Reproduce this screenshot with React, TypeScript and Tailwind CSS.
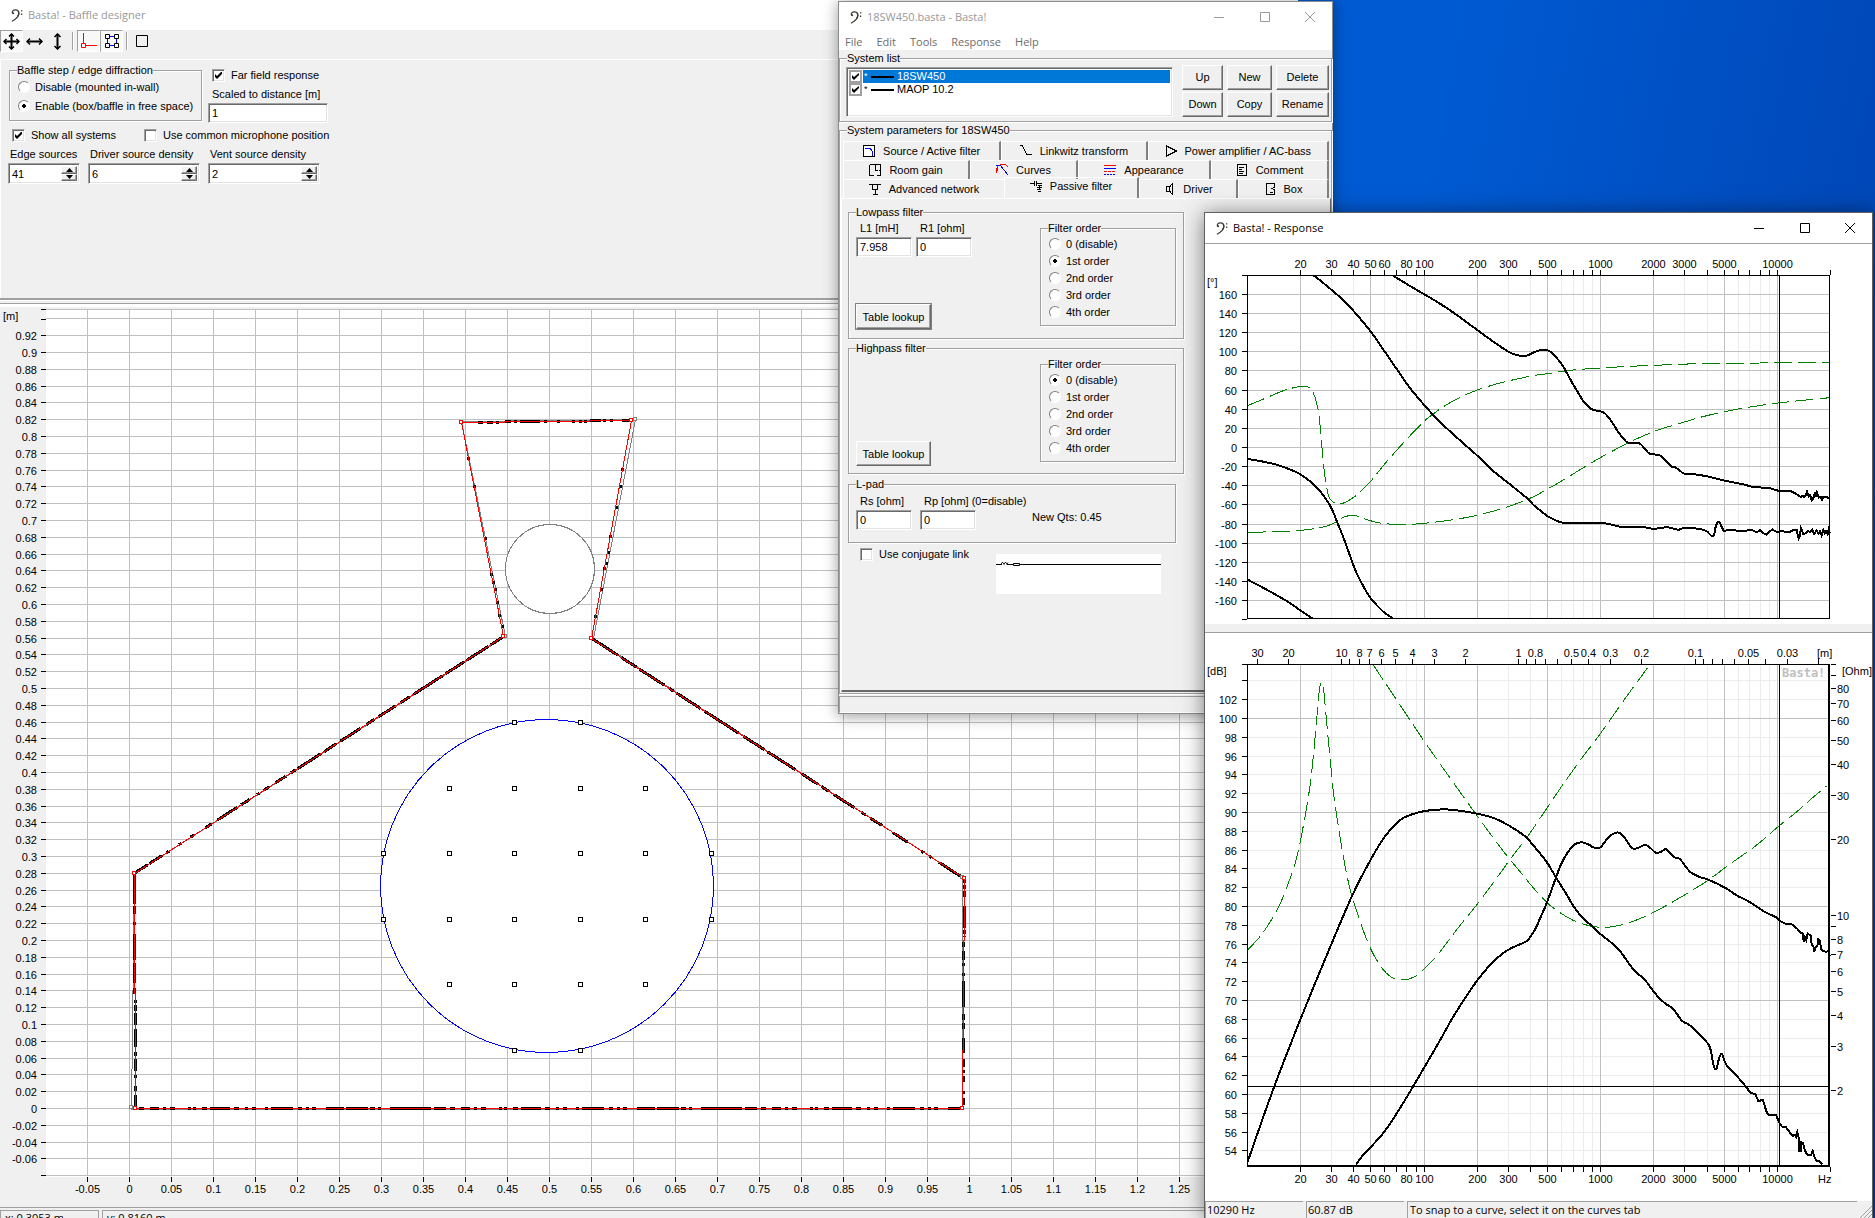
import React from 'react';

type Pt = [number, number];

const BOX =
  'border border-[#a0a0a0] border-r-white border-b-white bg-white shadow-[inset_1px_1px_0_#696969,inset_-1px_-1px_0_#e3e3e3]';
const BUTTON =
  'border border-white border-r-[#696969] border-b-[#696969] bg-[#f0f0f0] shadow-[inset_-1px_-1px_0_#a0a0a0] whitespace-nowrap';

/* ---------- small controls ---------- */

const ClefIcon: React.FC = () => (
  <svg width="12" height="13" viewBox="0 0 12 13" fill="none" stroke="#3c3c34" strokeWidth="1.2">
    <path d="M1.5 4.5C.6 2.200 2.300.8 4.300.8c2.300 0 3.600 1.300 3.600 3.500 0 3.200-3 5.900-7 7.900" />
    <path d="M7.200 2.200c.9 1.500.6 3.600-.7 5.200" />
    <circle cx="2.200" cy="4.300" r="1" fill="#3c3c34" stroke="none" />
    <path d="M10 1.200h1.300v1.300H10zM10 4.600h1.300v1.300H10z" fill="#3c3c34" stroke="none" />
  </svg>
);

const Group: React.FC<{ title: string; className?: string; children?: React.ReactNode }> = ({
  title,
  className = '',
  children,
}) => (
  <fieldset
    className={`min-w-0 border border-[#a0a0a0] shadow-[1px_1px_0_#fff,inset_1px_1px_0_#fff] ${className}`}
  >
    <legend className="ml-[7px] bg-[#f0f0f0] leading-[14px] whitespace-nowrap">{title}</legend>
    {children}
  </fieldset>
);

const Check: React.FC<{ label: string; checked?: boolean; className?: string }> = ({
  label,
  checked = false,
  className = '',
}) => (
  <label className={`flex items-center gap-[6px] whitespace-nowrap ${className}`}>
    <span className="relative flex">
      <input
        type="checkbox"
        defaultChecked={checked}
        className={`peer h-[13px] w-[13px] appearance-none ${BOX}`}
      />
      <svg
        className="pointer-events-none absolute top-[3px] left-[3px] hidden peer-checked:block"
        width="7"
        height="7"
        viewBox="0 0 7 7"
      >
        <path d="M0 2v3l2 2 5-5V-1L2 4z" />
      </svg>
    </span>
    {label}
  </label>
);

const Radio: React.FC<{ name: string; label: string; checked?: boolean; className?: string }> = ({
  name,
  label,
  checked = false,
  className = '',
}) => (
  <label className={`flex items-center gap-[5px] whitespace-nowrap ${className}`}>
    <input
      type="radio"
      name={name}
      defaultChecked={checked}
      className="h-3 w-3 appearance-none rounded-full border border-[#808080] border-r-white border-b-white bg-white checked:bg-[radial-gradient(circle,#000_2px,#fff_2px)]"
    />
    {label}
  </label>
);

const Field: React.FC<{ label: string; value: string; className?: string }> = ({
  label,
  value,
  className = '',
}) => (
  <label className={`flex flex-col gap-[2px] ${className}`}>
    <span className="pl-1 leading-[14px] whitespace-nowrap">{label}</span>
    <input type="text" defaultValue={value} className={`h-5 w-full px-[3px] ${BOX}`} />
  </label>
);

const Spin: React.FC<{ label: string; value: string; className?: string }> = ({
  label,
  value,
  className = '',
}) => {
  const id = label.toLowerCase().replace(/ /g, '-');
  return (
    <div className={`flex flex-col gap-[2px] ${className}`}>
      <label htmlFor={id} className="pl-[2px] leading-[14px] whitespace-nowrap">
        {label}
      </label>
      <div className={`flex h-[21px] p-[2px] ${BOX}`}>
        <input id={id} type="text" defaultValue={value} className="w-0 flex-1 bg-transparent px-px" />
        <div className="flex w-4 flex-col">
          <button aria-label={`${label} up`} className={`flex flex-1 items-center justify-center ${BUTTON}`}>
            <svg width="7" height="4">
              <path d="M0 4l3.500-4L7 4z" />
            </svg>
          </button>
          <button aria-label={`${label} down`} className={`flex flex-1 items-center justify-center ${BUTTON}`}>
            <svg width="7" height="4">
              <path d="M0 0h7L3.500 4z" />
            </svg>
          </button>
        </div>
      </div>
    </div>
  );
};

const TitleBar: React.FC<{ title: string; tone: string; controls?: boolean }> = ({
  title,
  tone,
  controls = true,
}) => (
  <header className={`flex h-[30px] shrink-0 items-center bg-white pl-[11px] ${tone}`}>
    <ClefIcon />
    <h1 className="ml-[5px] flex-1 font-['Open_Sans',sans-serif] text-[11px]">{title}</h1>
    {controls && (
      <div className="flex">
        <button aria-label="Minimize" className="flex h-[30px] w-[46px] items-center justify-center">
          <svg width="10" height="10" stroke="currentColor">
            <path d="M0 5.500h10" />
          </svg>
        </button>
        <button aria-label="Maximize" className="flex h-[30px] w-[45px] items-center justify-center">
          <svg width="10" height="10" fill="none" stroke="currentColor">
            <path d="M.5.5h9v9h-9z" />
          </svg>
        </button>
        <button aria-label="Close" className="flex h-[30px] w-[45px] items-center justify-center">
          <svg width="10" height="10" stroke="currentColor">
            <path d="M0 0l10 10M10 0L0 10" />
          </svg>
        </button>
      </div>
    )}
  </header>
);

/* ---------- baffle designer ---------- */

const bx = (m: number) => Math.round(129 + 840 * m) + 0.5;
const by = (m: number) => Math.round(1108 - 840 * m) + 0.5;

const yMarks = Array.from({ length: 51 }, (_, i) => (i * 2 - 6) / 100).filter((v) => v <= 0.92);
const xMarks = Array.from({ length: 27 }, (_, i) => (i * 5 - 5) / 100);

const neckDots: Pt[] = [
  [468, 458], [474, 486], [485, 538], [491, 574], [493, 582], [495, 589], [497, 602], [499, 615], [502, 626],
  [622, 469], [620, 486], [616, 507], [610, 536], [608, 552], [606, 563], [604, 568], [601, 589], [595, 616],
];
const topRuns: Pt[] = [
  [478, 483], [487, 493], [496, 499], [505, 511], [514, 517], [520, 540], [544, 547], [557, 560],
  [572, 575], [579, 582], [584, 587], [590, 601], [603, 606], [610, 613], [622, 630],
];
const driverGrid: Pt[] = [
  ...[788, 853, 919, 984].flatMap((y) => [449, 514, 580, 645].map((x): Pt => [x, y])),
  [514, 722], [580, 722], [514, 1050], [580, 1050],
  [383, 853], [383, 919], [711, 853], [711, 919],
];
const corners: Pt[] = [
  [461, 422], [631, 420], [591, 638], [964, 878], [962, 1108], [135, 1108], [134, 873], [503, 636],
];
const greyCorners: Pt[] = [[635, 419], [962, 877], [131, 1107], [505, 636]];

const BafflePlot: React.FC = () => (
  <svg
    className="block shrink-0"
    width="1297"
    height="900"
    viewBox="1 307 1297 900"
    shapeRendering="crispEdges"
    fontSize="11"
  >
    <rect x="46" y="309" width="1260" height="868" fill="#fff" />
    <g stroke="#c0c0c0">
      {xMarks.map((v) => (
        <path key={v} d={`M${bx(v)} 309V1176`} />
      ))}
      {[0.94, ...yMarks].map((v) => (
        <path key={v} d={`M46 ${by(v)}H1300`} />
      ))}
      <path d="M46 309.500H1300M46 1175.500H1300" />
    </g>
    <g stroke="#000">
      {xMarks.map((v) => (
        <path key={v} d={`M${bx(v)} 1177v5`} />
      ))}
      {yMarks.map((v) => (
        <path key={v} d={`M41 ${by(v)}h5`} />
      ))}
      <path d="M41 309.500h5M41 319.500h5M41 1175.500h5" />
    </g>
    {yMarks.map((v) => (
      <text key={v} x="37" y={by(v) + 4} textAnchor="end">
        {v}
      </text>
    ))}
    {xMarks.map((v) => (
      <text key={v} x={bx(v)} y="1193" textAnchor="middle">
        {v}
      </text>
    ))}
    <text x="3" y="320">[m]</text>

    <circle cx="550" cy="569" r="44.500" fill="#fff" stroke="#808080" />
    <path
      d="M461.500 421.500L635.500 419.500 593.500 638.500 962.500 877.500V1109.500H131.500L134.500 873.500 505.500 636.500z"
      fill="none"
      stroke="#808080"
    />
    {/* edge sources */}
    <g stroke="#000" strokeWidth="3" fill="none">
      <path
        d="M503 637L134 873.500"
        strokeDasharray="15 2 26 3 22 4 34 5 11 6 20 5 9 7 24 5 14 4 28 3 5 6 12 7 7 5 3 9 10 4 24 7 8 13 4 11 3 12 3 5"
      />
      <path
        d="M592 638.500L964 878.500"
        strokeDasharray="31 4 18 3 30 6 5 4 28 5 40 6 25 4 33 7 20 4 9 6 24 9 5 5 14 13 18 16 3 6 3 9"
      />
      <path d="M134.500 874V994" strokeDasharray="30 2 8 8 3 9 26 3 20 5 6 3" />
      <path d="M135.500 1000V1108" strokeDasharray="3 2 6 2 12 4 18 5 4 3 12 4 3 8 5 4 11 3" />
      <path d="M964.500 880V937" strokeDasharray="3 2 4 2 6 9 22 2 4 2" />
      <path d="M963.500 942V1108" strokeDasharray="5 4 9 3 3 7 3 5 26 7 6 3 6 9 15 6 8 3 3 3 6 9 3 4 7 4 12 3" />
      <path
        d="M139 1108.500H962"
        strokeDasharray="5 6 9 4 3 4 5 13 3 2 3 6 5 3 20 4 5 6 3 4 4 9 3 3 22 5 4 4 3 3 4 10 18 2 22 2 5 3 3 9 41 3 12 4"
      />
      {topRuns.map(([a, b]) => (
        <path key={a} d={`M${a} ${a > 588 ? 420.5 : a > 504 ? 421.5 : 422.5}H${b}`} />
      ))}
    </g>
    {neckDots.map(([x, y]) => (
      <rect key={`${x}-${y}`} x={x - 1} y={y - 1} width="3" height="3" />
    ))}
    <path
      d="M461.500 422.500H504V421.500H589V420.500H631.500L591.500 638.500 964.500 878.500V940H963.500V1050H962.500V1108.500H135.500V993H134.500V873.500L503.500 636.500z"
      fill="none"
      stroke="#f00"
    />
    {greyCorners.map(([x, y]) => (
      <rect key={x} x={x - 1.5} y={y - 1.5} width="3" height="3" fill="#fff" stroke="#808080" />
    ))}
    {corners.map(([x, y]) => (
      <rect key={x} x={x - 1.5} y={y - 1.5} width="3" height="3" fill="#fff" stroke="#f00" />
    ))}

    <circle cx="547" cy="886" r="166.500" fill="#fff" stroke="#00f" />
    {driverGrid.map(([x, y]) => (
      <rect key={`${x}-${y}`} x={x - 1.5} y={y - 1.5} width="4" height="4" fill="#fff" stroke="#000" />
    ))}
  </svg>
);

const pressed =
  'border border-[#a0a0a0] border-r-white border-b-white bg-[#f8f8f8] flex h-[22px] w-[23px] items-center justify-center';

const BaffleWindow: React.FC = () => (
  <section className="absolute top-0 left-0 flex h-full w-[1298px] flex-col overflow-hidden bg-[#f0f0f0]">
    <TitleBar title="Basta! - Baffle designer" tone="text-[#999]" controls={false} />
    <div className="flex h-[29px] shrink-0 items-start">
      <button aria-label="Move" className={pressed}>
        <svg width="17" height="17" stroke="#000" strokeWidth="2">
          <path d="M8.500 1v15M1 8.500h15" />
          <path d="M6 3.500L8.500 1 11 3.500M6 13.500L8.500 16l2.500-2.500M3.500 6L1 8.500 3.500 11M13.500 6L16 8.500 13.500 11" fill="none" strokeWidth="1.500" />
        </svg>
      </button>
      <button aria-label="Move horizontally" className="flex h-[22px] w-[22px] items-center justify-center">
        <svg width="17" height="9" stroke="#000" strokeWidth="2">
          <path d="M1 4.500h15" />
          <path d="M4 1.500l-3 3 3 3M13 1.500l3 3-3 3" fill="none" strokeWidth="1.500" />
        </svg>
      </button>
      <button aria-label="Move vertically" className="flex h-[22px] w-6 items-center justify-center">
        <svg width="9" height="17" stroke="#000" strokeWidth="2">
          <path d="M4.500 1v15" />
          <path d="M1.500 4l3-3 3 3M1.500 13l3 3 3-3" fill="none" strokeWidth="1.500" />
        </svg>
      </button>
      <span className="mx-[3px] mt-[2px] h-[18px] w-[2px] border-l border-[#a0a0a0] bg-white" />
      <button aria-label="Corner" className={pressed}>
        <svg width="16" height="16" fill="none" stroke="#f00">
          <path d="M2.500 0v10M5 12.500h11" />
          <path d="M.5 10.500h4v4h-4z" />
        </svg>
      </button>
      <button aria-label="Sources" className={pressed}>
        <svg width="14" height="14" fill="none" stroke="#000">
          <path d="M2.500 3v8M11.500 3v8M4 2.500h6M4 11.500h6" stroke="#00f" />
          <path d="M.5.5h4v4h-4zM9.500.5h4v4h-4zM.5 9.500h4v4h-4zM9.500 9.500h4v4h-4z" fill="#fff" />
        </svg>
      </button>
      <span className="mx-[3px] mt-[2px] h-[18px] w-[2px] border-l border-[#a0a0a0] bg-white" />
      <button aria-label="Outline" className="flex h-[22px] w-[21px] items-center justify-center">
        <svg width="12" height="12" fill="none" stroke="#000">
          <path d="M.5.5h11v11H.5z" />
        </svg>
      </button>
    </div>

    <div className="h-[239px] shrink-0 border-t border-l border-white pt-[3px] pl-2">
      <div className="flex gap-[6px]">
        <Group title="Baffle step / edge diffraction" className="h-[58px] w-[193px]">
          <Radio name="step" label="Disable (mounted in-wall)" className="mt-px ml-2 h-[18px]" />
          <Radio name="step" label="Enable (box/baffle in free space)" checked className="ml-2 h-5" />
        </Group>
        <div className="flex flex-col">
          <Check label="Far field response" checked className="mt-[5px] ml-1 h-[14px]" />
          <Field label="Scaled to distance [m]" value="1" className="mt-[5px] w-[120px]" />
        </div>
      </div>
      <div className="mt-1 ml-[3px] flex h-4">
        <Check label="Show all systems" checked className="w-[132px]" />
        <Check label="Use common microphone position" />
      </div>
      <div className="mt-1 -ml-px flex gap-2">
        <Spin label="Edge sources" value="41" className="w-[72px]" />
        <Spin label="Driver source density" value="6" className="w-28" />
        <Spin label="Vent source density" value="2" className="w-28" />
      </div>
    </div>
    <div className="flex h-[9px] shrink-0 flex-col justify-between border-t-2 border-[#a0a0a0]">
      <span className="h-px bg-white" />
      <span className="h-[4px] border-t border-[#a0a0a0] bg-white" />
    </div>
    <div className="pl-px">
      <BafflePlot />
    </div>
    <footer className="flex h-[30px] shrink-0 gap-[3px] border-t border-[#a0a0a0] pt-[2px] font-['Open_Sans',sans-serif]">
      <span className="w-[99px] border border-[#a0a0a0] pl-1 whitespace-nowrap">x: 0.3053 m</span>
      <span className="flex-1 border border-[#a0a0a0] pl-1">y: 0.8160 m</span>
    </footer>
  </section>
);

/* ---------- main window ---------- */

const tabRows = [
  {
    cols: 'grid-cols-[158fr_146fr_181fr]',
    tabs: [
      { label: 'Source / Active filter', icon: 'source' },
      { label: 'Linkwitz transform', icon: 'linkwitz' },
      { label: 'Power amplifier / AC-bass', icon: 'amp' },
    ],
  },
  {
    cols: 'grid-cols-[127fr_108fr_133fr_118fr]',
    tabs: [
      { label: 'Room gain', icon: 'room' },
      { label: 'Curves', icon: 'curves' },
      { label: 'Appearance', icon: 'appearance' },
      { label: 'Comment', icon: 'comment' },
    ],
  },
  {
    cols: 'grid-cols-[161fr_135fr_99fr_91fr]',
    tabs: [
      { label: 'Advanced network', icon: 'network' },
      { label: 'Passive filter', icon: 'passive' },
      { label: 'Driver', icon: 'driver' },
      { label: 'Box', icon: 'box' },
    ],
  },
];

const tabIcons: Record<string, React.ReactNode> = {
  source: (
    <>
      <path d="M.5.5h11v11H.5z" fill="#fff" />
      <path d="M2 3.500h4c3 0 3.500 3 4 7" stroke="#00f" />
    </>
  ),
  linkwitz: <path d="M0 .5h2l5 9h2l1.500-1M10 9.500h2" />,
  amp: <path d="M1.500 1v10l10-5z" />,
  room: <path d="M.5.5h11v11H8M5 11.500H.5V.5M6.500.5V7M6.500 6.500h2M11 6.500h-1.500" />,
  curves: (
    <>
      <path d="M0 6l2-4 3-1.500h4l3 2" stroke="#f00" />
      <path d="M0 1.500h4.500L12 11" stroke="#00f" />
      <path d="M0 9l2-5" stroke="#f00" />
    </>
  ),
  appearance: (
    <>
      <path d="M0 1.500h12" stroke="#f00" />
      <path d="M0 4.500h12" stroke="#00f" />
      <path d="M0 7.500h12" stroke="#f00" strokeDasharray="3 1" />
      <path d="M0 10.500h12" stroke="#00f" strokeDasharray="2 1" />
    </>
  ),
  comment: <path d="M1.500.5h9v11h-9zM3 3.500h5M3 5.500h3M3 7.500h5M3 9.500h4" />,
  network: <path d="M0 1.500h12M3.500 1.500v5h5v-5M6.500 7v4M4 11.500h5" />,
  passive: <path d="M0 3.500h4M4.500 1v5M6.500 1v5M7 3.500h5M8 5.500h3L8 7.500h3L8 9.500h3M8 11.500h3" />,
  driver: <path d="M3.500 3.500h3v5h-3zM7 3.500L9.500.5v11L7 8.500" />,
  box: <path d="M2.500.5h8V4L8 5.500 10.500 7v4.500h-8zM6 9.500h3" />,
};

const TabIcon: React.FC<{ name: string }> = ({ name }) => (
  <svg width="12" height="12" viewBox="0 0 12 12" fill="none" stroke="#000" shapeRendering="crispEdges">
    {tabIcons[name]}
  </svg>
);

const orders = ['0 (disable)', '1st order', '2nd order', '3rd order', '4th order'];

const FilterOrder: React.FC<{ name: string; selected: number }> = ({ name, selected }) => (
  <Group title="Filter order" className="mt-[2px] h-[105px] w-[136px]">
    <div className="pl-2">
      {orders.map((o, i) => (
        <Radio key={o} name={name} label={o} checked={i === selected} className="h-[17px]" />
      ))}
    </div>
  </Group>
);

const SystemRow: React.FC<{ name: string; selected?: boolean }> = ({ name, selected = false }) => (
  <label className="flex h-[13px] items-center">
    <span className="relative flex w-[14px]">
      <input
        type="checkbox"
        defaultChecked
        aria-label={name}
        className="h-[13px] w-[13px] appearance-none border-2 border-[#a0a0a0] bg-white"
      />
      <svg className="pointer-events-none absolute top-[3px] left-[3px]" width="7" height="7">
        <path d="M0 2v3l2 2 5-5V0L2 4z" />
      </svg>
    </span>
    <span
      className={`flex h-[13px] flex-1 items-center leading-[13px] ${selected ? 'bg-[#0078d7] text-white' : ''}`}
    >
      <span className="w-2 pl-px text-[9px]">*</span>
      <span className="mr-[3px] h-[2px] w-[23px] bg-black" />
      {name}
    </span>
  </label>
);

const MainWindow: React.FC = () => (
  <section className="absolute top-px left-[838px] flex h-[713px] w-[495px] flex-col border border-[#8c8c8c] bg-[#f0f0f0] shadow-[0_2px_14px_rgba(0,0,0,0.4)]">
    <TitleBar title="18SW450.basta - Basta!" tone="text-[#999]" />
    <nav className="flex h-[18px] shrink-0 items-center gap-[14px] bg-white pt-px pl-[6px] font-['Open_Sans',sans-serif] text-[11px] text-[#6d6d6d]">
      <button>File</button>
      <button>Edit</button>
      <button>Tools</button>
      <button>Response</button>
      <button>Help</button>
    </nav>

    <Group title="System list" className="mt-px h-[71px]">
      <div className="flex gap-[9px] pr-[2px] pl-[6px]">
        <div className={`mt-[2px] h-[50px] flex-1 p-[2px] ${BOX}`}>
          <SystemRow name="18SW450" selected />
          <SystemRow name="MAOP 10.2" />
        </div>
        <div className="grid grid-cols-[41px_45px_53px] gap-x-1 gap-y-[2px]">
          {['Up', 'New', 'Delete', 'Down', 'Copy', 'Rename'].map((b) => (
            <button key={b} className={`h-[25px] pb-[2px] ${BUTTON}`}>
              {b}
            </button>
          ))}
        </div>
      </div>
    </Group>

    <Group title="System parameters for 18SW450" className="mt-px h-[571px]">
      <div className="pt-1 pr-[2px] pl-[3px]">
        {tabRows.map((row) => (
          <div key={row.cols} className={`grid ${row.cols}`}>
            {row.tabs.map((t) => (
              <button
                key={t.label}
                className={`flex h-[19px] items-center justify-center gap-2 border-t border-l border-white whitespace-nowrap ${
                  t.icon === 'passive'
                    ? '-mt-[2px] h-[21px] border-r-2 border-r-[#808080] pb-1'
                    : t.icon === 'network'
                    ? ''
                    : 'border-r-2 border-r-[#808080]'
                }`}
              >
                <TabIcon name={t.icon} />
                {t.label}
              </button>
            ))}
          </div>
        ))}
      </div>
      <div className="ml-px h-[494px] border border-white border-r-[#696969] border-b-2 border-b-[#696969] pt-[6px] pl-[6px]">
        <Group title="Lowpass filter" className="h-[134px] w-[336px]">
          <div className="flex h-[119px] justify-between px-[7px]">
            <div className="flex flex-col justify-between pt-[2px] pb-[9px]">
              <div className="flex gap-1">
                <Field label="L1 [mH]" value="7.958" className="w-14" />
                <Field label="R1 [ohm]" value="0" className="w-14" />
              </div>
              <button className={`h-[25px] w-[75px] outline outline-[#808080] ${BUTTON}`}>Table lookup</button>
            </div>
            <FilterOrder name="lowpass" selected={1} />
          </div>
        </Group>
        <Group title="Highpass filter" className="mt-[2px] h-[133px] w-[336px]">
          <div className="flex h-[118px] justify-between px-[7px]">
            <button className={`mb-[7px] h-[25px] w-[75px] self-end ${BUTTON}`}>Table lookup</button>
            <FilterOrder name="highpass" selected={0} />
          </div>
        </Group>
        <Group title="L-pad" className="mt-[3px] h-[66px] w-[328px]">
          <div className="flex gap-2 pt-[3px] pl-[7px]">
            <Field label="Rs [ohm]" value="0" className="w-14" />
            <Field label="Rp [ohm] (0=disable)" value="0" className="w-14" />
            <span className="mt-4 ml-12 leading-[14px]">New Qts: 0.45</span>
          </div>
        </Group>
        <div className="flex items-start pl-3">
          <Check label="Use conjugate link" className="mt-1 w-[136px]" />
          <svg className="mt-[11px] bg-white" width="165" height="40" fill="none" stroke="#000">
            <path d="M0 10.500h6M11 10.500h6M24 10.500h141" />
            <path d="M5 10.500l1-2h1l1 2 1-2h1l1 2 1-2" strokeWidth=".8" />
            <path d="M17.500 9.500h6v2h-6z" />
          </svg>
        </div>
      </div>
    </Group>
    <footer className="mt-[2px] h-[17px] border border-[#a0a0a0] border-r-white border-b-white" />
  </section>
);

/* ---------- response window ---------- */

// curve samples are kept in thirds of a pixel, px() brings them back to chart pixels
const px = (x0: number, y0: number, sy: number, pts: Pt[]): Pt[] =>
  pts.map(([x, y]) => [x0 + x / 3, y0 + y / sy]);

const smooth = (p: Pt[]) => {
  let d = `M${p[0][0].toFixed(1)} ${p[0][1].toFixed(1)}`;
  for (let i = 0; i < p.length - 1; i++) {
    const a = p[Math.max(i - 1, 0)];
    const b = p[i];
    const c = p[i + 1];
    const e = p[Math.min(i + 2, p.length - 1)];
    const n = [
      b[0] + (c[0] - a[0]) / 6, b[1] + (c[1] - a[1]) / 6,
      c[0] - (e[0] - b[0]) / 6, c[1] - (e[1] - b[1]) / 6,
      c[0], c[1],
    ].map((v) => v.toFixed(1));
    d += `C${n.join(' ')}`;
  }
  return d;
};

// the noisy end of a curve is drawn with straight segments
const jagged = (p: Pt[]) => p.map(([x, y]) => `L${x.toFixed(1)} ${y.toFixed(1)}`).join('');

const phase = (left: Pt[], right: Pt[] = [], tail: Pt[] = []) =>
  smooth([...px(1200, 205, 3, left), ...px(1530, 205, 3, right)]) + jagged(px(1530, 205, 3, tail));
const level = (left: Pt[], right: Pt[] = [], tail: Pt[] = []) =>
  smooth([...px(1200, 620, 2.622, left), ...px(1530, 620, 2.622, right)]) +
  jagged(px(1530, 620, 2.622, tail));

const phaseCurves = [
  phase(
    [[342,212],[360,226],[395,255],[430,286],[460,317],[511,378],[553,438],[590,492],[620,536],[650,574],[673,600],[697,627],[740,670],[800,724],[832,752],[875,794],[925,834],[985,883]],
    [[8,898],[25,912],[52,933],[80,947],[98,953],[150,954],[215,954],[245,959],[280,967],[330,965],[370,971],[412,967],[445,974],[465,968],[510,972],[530,979],[545,993],[552,990],[558,962],[567,951],[575,965],[582,977],[600,974],[630,978],[665,975]],
    [[680,982],[690,975],[698,984],[710,989],[718,980],[728,973],[735,979],[745,982],[755,977],[765,981],[778,982],[790,975],[800,975],[803,990],[806,1001],[808,998],[813,970],[820,988],[828,984],[835,978],[840,982],[847,975],[853,987],[860,976],[865,986],[870,979],[875,992],[880,974],[884,984],[888,979],[893,988],[896,974],[900,984]]
  ),
  phase(
    [[580,212],[620,237],[673,268],[720,296],[765,326],[832,375],[880,410],[925,440],[950,450],[968,453],[985,451]],
    [[3,446],[20,439],[40,434],[58,438],[75,453],[98,482],[130,539],[160,588],[180,609],[195,616],[222,623],[245,650],[265,682],[285,706],[295,713],[328,715],[345,732],[360,747],[388,750],[405,765],[425,785],[438,788],[463,806],[495,808],[530,814],[585,827],[640,838],[670,846],[715,849],[745,857],[780,858],[800,868]],
    [[813,877],[817,872],[822,876],[828,870],[831,860],[836,874],[841,870],[845,886],[850,880],[855,862],[857,876],[861,862],[866,878],[872,875],[876,884],[880,876],[890,876],[895,880],[900,877]]
  ),
  phase([[143,762],[195,771],[245,784],[301,808],[345,842],[375,878],[395,911],[413,955],[435,1010],[460,1080],[480,1125],[511,1178],[550,1220],[578,1240]]),
  phase([[143,1124],[200,1154],[260,1188],[301,1216],[337,1240]]),
];

const phaseImpedance = [
  phase(
    [[143,602],[200,578],[250,557],[290,546],[301,544],[325,546],[338,560],[350,595],[358,640],[366,730],[375,815],[385,870],[395,887],[415,897],[440,890],[470,870],[511,830],[560,770],[620,703],[673,648],[697,629],[730,605],[780,577],[832,555],[900,534],[970,518]],
    [[20,510],[52,506],[130,495],[211,489],[300,484],[420,479],[540,475],[690,474],[740,472],[900,472]]
  ),
  phase(
    [[143,982],[260,979],[330,973],[380,963],[413,949],[430,937],[460,931],[490,940],[511,947],[553,956],[620,958],[673,955],[760,944],[832,931],[915,908],[985,882]],
    [[30,865],[100,825],[160,788],[211,758],[290,716],[370,680],[450,655],[530,632],[620,613],[715,598],[780,590],[850,583],[900,578]]
  ),
];

const levelCurves = [
  level(
    [[143,1420],[222,1225],[301,1048],[395,848],[457,722],[511,630],[553,570],[600,525],[635,510],[673,501],[720,497],[760,498],[832,508],[880,519],[925,538],[975,567]],
    [[5,586],[30,612],[52,637],[78,675],[110,720],[130,750],[160,783],[190,805],[211,823],[245,847],[270,868],[300,905],[320,925],[345,944],[380,984],[405,1005],[430,1020],[455,1050],[480,1063],[510,1089],[535,1112],[543,1132],[552,1172],[560,1176],[567,1150],[576,1138],[585,1160],[600,1178],[620,1195]],
    [[640,1215],[650,1226],[662,1241],[676,1242],[685,1262],[698,1258],[710,1290],[716,1298],[738,1298],[750,1322],[756,1328],[768,1330],[778,1342],[788,1353],[794,1350],[798,1355],[802,1343],[806,1358],[808,1393],[812,1393],[814,1370],[819,1372],[824,1390],[830,1400],[838,1404],[844,1402],[848,1392],[854,1410],[860,1418],[868,1418],[876,1427]]
  ),
  level(
    [[468,1428],[490,1402],[511,1383],[553,1342],[600,1280],[640,1222],[673,1173],[720,1102],[760,1040],[800,985],[832,945],[870,905],[910,873],[940,858],[978,843]],
    [[0,832],[15,812],[30,783],[52,738],[78,675],[95,637],[115,607],[135,588],[155,583],[175,588],[190,596],[211,596],[235,570],[262,557],[280,567],[305,597],[322,598],[345,590],[360,597],[378,611],[392,608],[407,601],[420,610],[435,623],[450,627],[480,660],[510,674],[535,681],[585,702],[620,722],[660,740],[700,763],[740,780]],
    [[752,790],[768,797],[785,798],[800,808],[812,820],[818,822],[821,844],[825,832],[829,840],[833,822],[838,825],[842,828],[845,850],[850,855],[853,870],[857,858],[862,856],[865,838],[870,842],[873,862],[878,868],[890,870],[895,866],[900,882]]
  ),
];

const levelImpedance = [
  level(
    [[143,865],[180,830],[215,785],[240,745],[265,690],[285,640],[301,580],[320,490],[335,400],[350,260],[358,185],[364,165],[371,185],[380,270],[390,360],[400,450],[413,530],[430,620],[450,705],[480,790],[511,860],[545,912],[575,937],[605,944],[640,937],[673,915],[720,870],[770,812],[832,745],[900,665],[930,628],[985,565]],
    [[30,520],[52,492],[100,430],[160,357],[211,298],[290,200],[360,117]]
  ),
  level(
    [[519,117],[590,210],[673,318],[740,402],[830,512],[900,595],[930,628],[970,670]],
    [[0,692],[30,722],[60,748],[100,773],[150,795],[211,806],[260,802],[310,790],[370,767],[420,743],[475,715],[535,682],[600,640],[680,590],[740,545],[800,503],[845,468],[890,435]]
  ),
];

const fx = (hz: number) => Math.round(1247 + (Math.log10(hz) - 1) * 176.6) + 0.5;
const mx = (m: number) => Math.round(1518 - Math.log10(m) * 176.6) + 0.5;
const degY = (deg: number) => Math.round(447 - deg * 0.957) + 0.5;
const dbY = (db: number) => Math.round(718 + (100 - db) * 9.4) + 0.5;
const ohmY = (ohm: number) => Math.round(915 - (Math.log10(ohm) - 1) * 251) + 0.5;

const freqs = [10, 100, 1000].flatMap((d) => [1, 2, 3, 4, 5, 6, 7, 8, 9].map((n) => n * d)).slice(1);
freqs.push(10000);
const freqLabels = [20, 30, 40, 50, 60, 80, 100, 200, 300, 500, 1000, 2000, 3000, 5000, 10000];
const isMajor = (hz: number) => /^[125]0+$/.test(String(hz));
const degs = Array.from({ length: 17 }, (_, i) => 160 - i * 20);
const dbs = Array.from({ length: 26 }, (_, i) => 104 - i * 2);
const metres = [30, 20, 10, 9, 8, 7, 6, 5, 4, 3, 2, 1, 0.9, 0.8, 0.7, 0.6, 0.5, 0.4, 0.3, 0.2, 0.1, 0.09, 0.08, 0.07, 0.06, 0.05, 0.04, 0.03, 0.02];
const metreLabels = [30, 20, 10, 8, 7, 6, 5, 4, 3, 2, 1, 0.8, 0.5, 0.4, 0.3, 0.2, 0.1, 0.05, 0.03];
const ohms = [100, 90, 80, 70, 60, 50, 40, 30, 20, 10, 9, 8, 7, 6, 5, 4, 3, 2];

const FreqLines: React.FC<{ top: number; bottom: number }> = ({ top, bottom }) => (
  <>
    {freqs
      .slice()
      .sort((a, b) => Number(isMajor(a)) - Number(isMajor(b)))
      .map((f) => (
        <path key={f} d={`M${fx(f)} ${top}V${bottom}`} stroke={isMajor(f) ? '#c0c0c0' : '#ececec'} />
      ))}
  </>
);

const FreqScale: React.FC<{ tickY: number; textY: number }> = ({ tickY, textY }) => (
  <>
    {[...freqs, 20000].map((f) => (
      <path key={f} d={`M${fx(f)} ${tickY}v5`} stroke="#000" />
    ))}
    {freqLabels.map((f) => (
      <text key={f} x={fx(f)} y={textY} textAnchor="middle">
        {f}
      </text>
    ))}
  </>
);

const PhaseChart: React.FC = () => (
  <svg
    className="block shrink-0 bg-white"
    width="667"
    height="380"
    viewBox="1205 244 667 380"
    shapeRendering="crispEdges"
    fill="none"
    fontSize="11"
  >
    <FreqLines top={275} bottom={618} />
    {degs.map((d) => (
      <path key={d} d={`M1248 ${degY(d)}H1830`} stroke="#c0c0c0" />
    ))}
    {phaseImpedance.map((d) => (
      <path key={d} d={d} stroke="#008000" strokeDasharray="18 6" />
    ))}
    {phaseCurves.map((d) => (
      <path key={d} d={d} stroke="#000" strokeWidth="2" />
    ))}
    <path d="M1779.500 275V619" stroke="#000" />
    <path d="M1242 275.500H1829.500V618.500H1247.500V275M1242 619.500h5" stroke="#000" />
    {degs.map((d) => (
      <path key={d} d={`M1242 ${degY(d)}h5`} stroke="#000" />
    ))}
    <g fill="#000">
      <FreqScale tickY={270} textY={268} />
      {degs.map((d) => (
        <text key={d} x="1237" y={degY(d) + 4} textAnchor="end">
          {d}
        </text>
      ))}
      <text x="1207" y="286">[°]</text>
    </g>
  </svg>
);

const LevelChart: React.FC = () => (
  <svg
    className="block shrink-0 bg-white"
    width="667"
    height="568"
    viewBox="1205 633 667 568"
    shapeRendering="crispEdges"
    fill="none"
    fontSize="11"
  >
    {dbs.map((d) => (
      <path key={d} d={`M1248 ${dbY(d)}H1830`} stroke="#ececec" />
    ))}
    <FreqLines top={664} bottom={1165} />
    {[100, 90, 80, 70, 60].map((d) => (
      <path key={d} d={`M1248 ${dbY(d)}H1830`} stroke="#c0c0c0" />
    ))}
    <text
      x="1782"
      y="677"
      fill="#c0c0c0"
      fontFamily="DejaVu Sans Mono, monospace"
      fontWeight="bold"
      fontSize="12"
    >
      Basta!
    </text>
    {levelImpedance.map((d) => (
      <path key={d} d={d} stroke="#008000" strokeDasharray="18 6" />
    ))}
    {levelCurves.map((d) => (
      <path key={d} d={d} stroke="#000" strokeWidth="2" />
    ))}
    <path d="M1779.500 664V1166M1248 1086.500H1830" stroke="#000" />
    <path d="M1242 664.500H1830M1247.500 664V1166M1831 664.500h5" stroke="#000" />
    <path d="M1829 664V1167M1247 1166H1830" stroke="#000" strokeWidth="2" />
    {dbs.map((d) => (
      <path key={d} d={`M1242 ${dbY(d)}h5`} stroke="#000" />
    ))}
    {metres.map((m) => (
      <path key={m} d={`M${mx(m)} 659v5`} stroke="#000" />
    ))}
    {ohms.map((o) => (
      <path key={o} d={`M1831 ${ohmY(o)}h5`} stroke="#000" />
    ))}
    <g fill="#000">
      <FreqScale tickY={1167} textY={1183} />
      {dbs.slice(1).map((d) => (
        <text key={d} x="1237" y={dbY(d) + 4} textAnchor="end">
          {d}
        </text>
      ))}
      {metreLabels.map((m) => (
        <text key={m} x={mx(m)} y="657" textAnchor="middle">
          {m}
        </text>
      ))}
      {ohms
        .filter((o) => o < 90 && o !== 9)
        .map((o) => (
          <text key={o} x="1837" y={ohmY(o) + 4}>
            {o}
          </text>
        ))}
      <text x="1207" y="675">[dB]</text>
      <text x="1842" y="675">[Ohm]</text>
      <text x="1817" y="657">[m]</text>
      <text x="1818" y="1183">Hz</text>
    </g>
  </svg>
);

const ResponseWindow: React.FC = () => (
  <section className="absolute top-[212px] right-[2px] bottom-0 flex w-[669px] flex-col overflow-hidden border border-b-0 border-[#606060] bg-[#f0f0f0] shadow-[0_2px_20px_rgba(0,0,0,0.5)]">
    <TitleBar title="Basta! - Response" tone="text-black" />
    <div className="h-px shrink-0 bg-[#a0a0a0]" />
    <PhaseChart />
    <div className="h-[9px] shrink-0 border-b border-[#a0a0a0]" />
    <LevelChart />
    <footer className="flex flex-1 gap-[3px] font-['Open_Sans',sans-serif] text-[11px] leading-[16px]">
      <span className="w-[98px] border-t border-l border-[#a0a0a0] pl-px">10290 Hz</span>
      <span className="w-[98px] border-t border-l border-[#a0a0a0] pl-px">60.87 dB</span>
      <span className="flex-1 border-t border-l border-[#a0a0a0] pl-[2px]">
        To snap to a curve, select it on the curves tab
      </span>
      <svg className="self-end" width="12" height="12" stroke="#a0a0a0">
        <path d="M0 12L12 0M4 12l8-8M8 12l4-4" />
      </svg>
    </footer>
  </section>
);

const App: React.FC = () => (
  <main className="relative h-screen w-full overflow-hidden bg-[linear-gradient(100deg,#005ad2_0%,#005ad2_70%,#0042b0_98%,#0a3a94_100%)] font-['Liberation_Sans',Arial,sans-serif] text-[11px] leading-[14px] text-black">
    <BaffleWindow />
    <MainWindow />
    <ResponseWindow />
  </main>
);

export default App;
